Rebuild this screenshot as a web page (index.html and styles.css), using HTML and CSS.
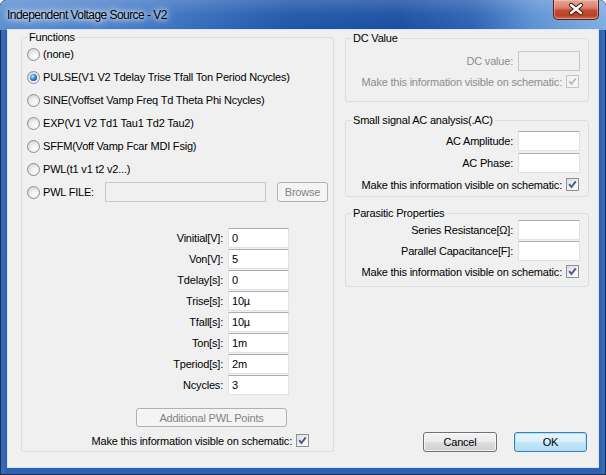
FILE: index.html
```html
<!DOCTYPE html>
<html>
<head>
<meta charset="utf-8">
<link rel="stylesheet" href="styles.css">
</head>
<body>
<div class="window">
  <div class="titlebar">
    <span class="title">Independent Voltage Source - V2</span>
    <span class="close"><svg width="44" height="18" viewBox="0 0 44 18"><path d="M17 5 L27 13 M27 5 L17 13" stroke="#3a1a14" stroke-width="4.2" stroke-linecap="round"/><path d="M17 5 L27 13 M27 5 L17 13" stroke="#ffffff" stroke-width="2.4" stroke-linecap="round"/></svg></span>
  </div>
  <div class="client">
    <fieldset class="group functions">
      <legend>Functions</legend>
      <div class="radios">
        <div class="radio-row"><span class="radio"></span><span>(none)</span></div>
        <div class="radio-row"><span class="radio on"></span><span>PULSE(V1 V2 Tdelay Trise Tfall Ton Period Ncycles)</span></div>
        <div class="radio-row"><span class="radio"></span><span>SINE(Voffset Vamp Freq Td Theta Phi Ncycles)</span></div>
        <div class="radio-row"><span class="radio"></span><span>EXP(V1 V2 Td1 Tau1 Td2 Tau2)</span></div>
        <div class="radio-row"><span class="radio"></span><span>SFFM(Voff Vamp Fcar MDI Fsig)</span></div>
        <div class="radio-row"><span class="radio"></span><span>PWL(t1 v1 t2 v2...)</span></div>
        <div class="radio-row"><span class="radio"></span><span class="pwl-label">PWL FILE:</span><span class="field disabled pwl-field"></span><span class="btn disabled browse">Browse</span></div>
      </div>
      <div class="params">
        <span class="plabel">Vinitial[V]:</span><span class="field">0</span>
        <span class="plabel">Von[V]:</span><span class="field">5</span>
        <span class="plabel">Tdelay[s]:</span><span class="field">0</span>
        <span class="plabel">Trise[s]:</span><span class="field">10µ</span>
        <span class="plabel">Tfall[s]:</span><span class="field">10µ</span>
        <span class="plabel">Ton[s]:</span><span class="field">1m</span>
        <span class="plabel">Tperiod[s]:</span><span class="field">2m</span>
        <span class="plabel">Ncycles:</span><span class="field">3</span>
      </div>
      <div class="btn disabled addpwl">Additional PWL Points</div>
      <div class="check-row left-check"><span>Make this information visible on schematic:</span><span class="check"><svg width="11" height="11" viewBox="0 0 11 11"><path d="M2.2 5.2 L4.4 8 L8.8 2.4" fill="none" stroke="#4a5d91" stroke-width="2"/></svg></span></div>
    </fieldset>
    <div class="right">
      <fieldset class="group dc">
        <legend>DC Value</legend>
        <div class="row"><span class="muted">DC value:</span><span class="field disabled"></span></div>
        <div class="check-row dis"><span class="muted">Make this information visible on schematic:</span><span class="check disabled"><svg width="11" height="11" viewBox="0 0 11 11"><path d="M2.2 5.2 L4.4 8 L8.8 2.4" fill="none" stroke="#b4b4b4" stroke-width="1.6"/></svg></span></div>
      </fieldset>
      <fieldset class="group ac">
        <legend>Small signal AC analysis(.AC)</legend>
        <div class="row"><span>AC Amplitude:</span><span class="field"></span></div>
        <div class="row r2"><span>AC Phase:</span><span class="field"></span></div>
        <div class="check-row"><span>Make this information visible on schematic:</span><span class="check"><svg width="11" height="11" viewBox="0 0 11 11"><path d="M2.2 5.2 L4.4 8 L8.8 2.4" fill="none" stroke="#4a5d91" stroke-width="2"/></svg></span></div>
      </fieldset>
      <fieldset class="group para">
        <legend>Parasitic Properties</legend>
        <div class="row"><span>Series Resistance[Ω]:</span><span class="field"></span></div>
        <div class="row r1"><span>Parallel Capacitance[F]:</span><span class="field"></span></div>
        <div class="check-row"><span>Make this information visible on schematic:</span><span class="check"><svg width="11" height="11" viewBox="0 0 11 11"><path d="M2.2 5.2 L4.4 8 L8.8 2.4" fill="none" stroke="#4a5d91" stroke-width="2"/></svg></span></div>
      </fieldset>
      <div class="buttons">
        <span class="btn cancel">Cancel</span>
        <span class="btn ok">OK</span>
      </div>
    </div>
  </div>
</div>
</body>
</html>
```
FILE: styles.css
```css
html, body {
  margin: 0;
  background: #ffffff;
}
body {
  font-family: "Liberation Sans", Arial, sans-serif;
  font-size: 11px;
  letter-spacing: -0.2px;
  color: #000;
}
.window {
  width: 606px;
  height: 475px;
  display: flex;
  flex-direction: column;
  border-radius: 6px 6px 0 0;
  overflow: hidden;
  background: linear-gradient(90deg, #1d4a92 0px, #3a6dba 2px, #2d62b2 6px, #2d62b2 600px, #3a6dba 604px, #1d4a92 606px);
  box-shadow: inset 0 0 0 1px #17305c;
}
.titlebar {
  height: 30px;
  flex: none;
  display: flex;
  align-items: flex-start;
  background:
    linear-gradient(180deg, rgba(255,255,255,0.18) 0%, rgba(255,255,255,0.05) 45%, rgba(0,0,0,0) 100%),
    linear-gradient(90deg, #5c8fd2 0%, #4f84cc 15%, #3a70c0 30%, #1e55a9 48%, #1a4ea3 66%, #2d62b4 78%, #5d91d3 88%, #7eaee2 100%);
  border-radius: 6px 6px 0 0;
}
.title {
  margin: 9px 0 0 7px;
  font-size: 12px;
  line-height: 12px;
  letter-spacing: -0.55px;
  color: #000;
  text-shadow: 0 0 4px rgba(255,255,255,0.9), 0 0 8px rgba(255,255,255,0.8), 0 0 12px rgba(255,255,255,0.6);
}
.close {
  margin-left: auto;
  margin-right: 7px;
  width: 46px;
  height: 20px;
  box-sizing: border-box;
  border: 1px solid #5b1f16;
  border-top: none;
  border-radius: 0 0 5px 5px;
  background: linear-gradient(180deg, #e7a797 0%, #d9826f 40%, #c44d36 55%, #b8402a 80%, #d26a4c 100%);
  box-shadow: inset 0 0 0 1px rgba(255,210,200,0.45);
  display: flex;
}
.close svg { display: block; }
.client {
  flex: 1;
  margin: 0 8px 8px;
  background: #f0f0f0;
  display: flex;
  padding: 0 9px 15px 13px;
  box-shadow: 0 0 0 1px #dbe5f1;
}
.group {
  margin: 0;
  padding: 0;
  min-width: 0;
  border: 1px solid #d5dfe5;
  border-radius: 3px;
  box-sizing: border-box;
}
.group legend {
  padding: 0 2px;
  margin-left: 5px;
  line-height: 13px;
  height: 13px;
}
.functions {
  width: 313px;
  margin-top: 1px;
  align-self: flex-start;
  padding-bottom: 4px;
}
.radios {
  display: flex;
  flex-direction: column;
  gap: 3px;
}
.radio-row {
  height: 20px;
  display: flex;
  align-items: center;
  padding-left: 5px;
  gap: 3px;
}
.radio {
  width: 13px;
  height: 13px;
  box-sizing: border-box;
  border-radius: 50%;
  border: 1px solid #8c8f92;
  background: radial-gradient(circle at 62% 66%, #ffffff 0%, #f1f1f1 35%, #d6d6d6 80%, #c8c8c8 100%);
  position: relative;
  flex: none;
}
.radio.on::after {
  content: "";
  position: absolute;
  left: 2px;
  top: 2px;
  width: 7px;
  height: 7px;
  border-radius: 50%;
  background: radial-gradient(circle at 38% 36%, #c9ecff 0%, #58a8ec 30%, #1d64bd 60%, #0c3f86 100%);
}
.pwl-label {
  width: 59px;
  flex: none;
}
.field {
  display: block;
  width: 61px;
  height: 20px;
  box-sizing: border-box;
  background: #fff;
  border: 1px solid #dfe3e8;
  border-top-color: #abadb3;
  padding: 0 3px;
  line-height: 18px;
  flex: none;
}
.field.disabled {
  background: #f0f0f0;
  border-color: #c5c8cc;
}
.pwl-field {
  width: 161px;
  background: #f4f4f4;
  border-color: #c9cbcd;
}
.btn {
  display: flex;
  align-items: center;
  justify-content: center;
  box-sizing: border-box;
  height: 20px;
  border: 1px solid #707070;
  border-radius: 3px;
  background: linear-gradient(180deg, #f4f4f4 0%, #ececec 48%, #dedede 52%, #d0d0d0 100%);
  box-shadow: inset 0 0 0 1px rgba(255,255,255,0.7);
  flex: none;
}
.btn.disabled {
  border-color: #adb2b5;
  background: #f4f4f4;
  color: #838383;
  box-shadow: none;
}
.browse {
  width: 51px;
  margin-left: 8px;
}
.params {
  margin-top: 26px;
  margin-left: 101px;
  display: grid;
  grid-template-columns: 100px 61px;
  column-gap: 5px;
  row-gap: 1px;
  align-items: center;
}
.plabel {
  text-align: right;
}
.addpwl {
  margin-top: 13px;
  margin-left: 114px;
  width: 151px;
  height: 19px;
}
.check-row {
  display: flex;
  align-items: center;
  justify-content: flex-end;
  gap: 4px;
  height: 13px;
  padding-right: 9px;
}
.left-check {
  margin-top: 7px;
  padding-right: 24px;
}
.check {
  width: 13px;
  height: 13px;
  box-sizing: border-box;
  border: 1px solid #8e8f8f;
  background: linear-gradient(135deg, #dcdcdc 0%, #f4f4f4 60%, #ffffff 100%);
  padding: 0;
  flex: none;
  display: block;
}
.check svg { display: block; }
.check.disabled {
  border-color: #c4c4c4;
  background: #f4f4f4;
}
.muted { color: #8d8d8d; }
.right {
  width: 244px;
  margin-left: 11px;
  display: flex;
  flex-direction: column;
  padding-top: 2px;
}
.row {
  display: flex;
  align-items: center;
  justify-content: flex-end;
  gap: 5px;
  padding-right: 8px;
  height: 20px;
}
.row .field { width: 62px; }
.dc { padding: 6px 0 13px; }
.dc .check-row { margin-top: 4px; }
.ac { margin-top: 12px; padding: 4px 0 5px; }
.ac .r2 { margin-top: 2px; }
.ac .check-row { margin-top: 5px; }
.para { margin-top: 10px; padding: 0 0 8px; }
.para .r1 { margin-top: 1px; }
.para .check-row { margin-top: 4px; }
.buttons {
  margin-top: auto;
  display: flex;
  justify-content: flex-end;
  gap: 17px;
  padding-right: 2px;
}
.cancel { width: 74px; height: 20px; }
.ok {
  width: 73px;
  height: 20px;
  border-color: #3c7fb1;
  background: linear-gradient(180deg, #eaf6fd 0%, #d9effc 48%, #c4e6fa 52%, #b2dcf5 100%);
  box-shadow: inset 0 0 0 1px rgba(170,225,250,0.9);
}
```
